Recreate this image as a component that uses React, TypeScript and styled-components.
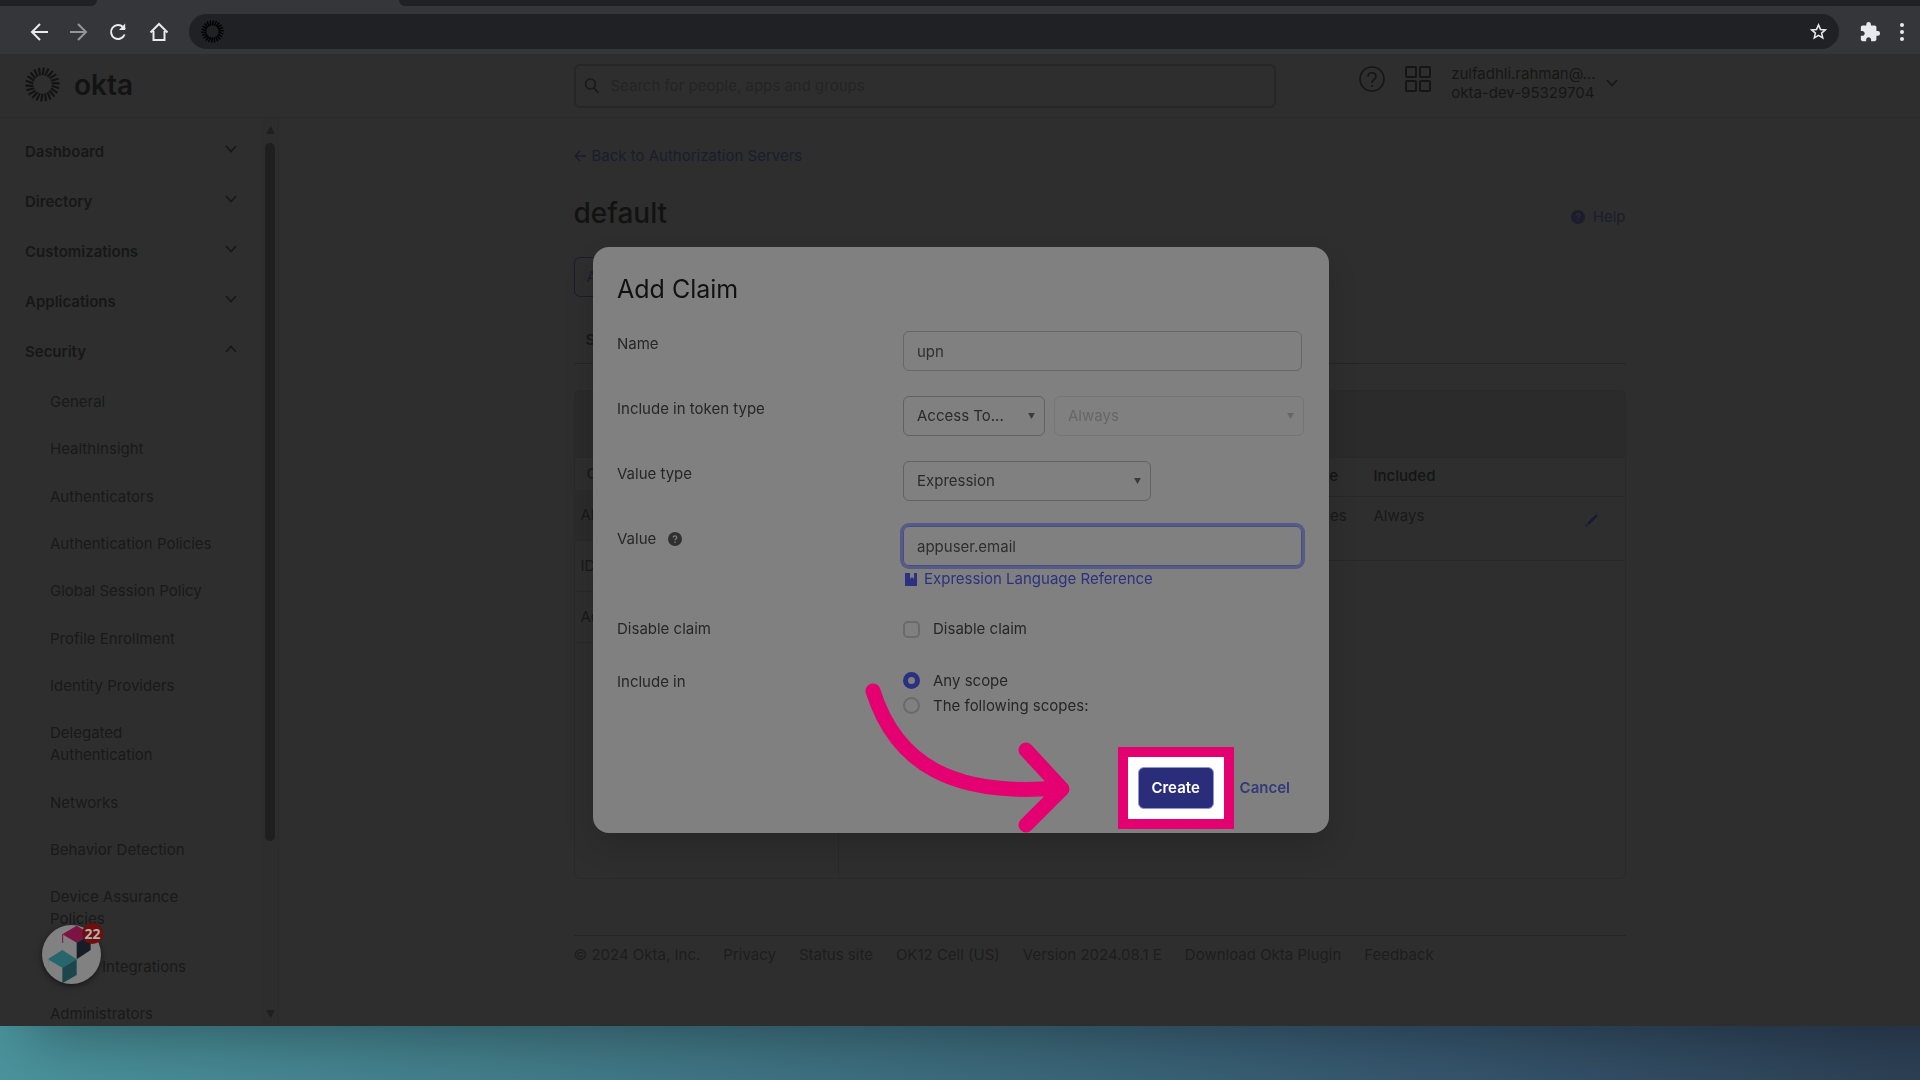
import React from "react";
import styled, { createGlobalStyle, css } from "styled-components";
import { MdExtension } from "react-icons/md";

const PINK = "#e50071";
const INDIGO = "#2b3080";

const GlobalStyle = createGlobalStyle`
  *, *::before, *::after { box-sizing: border-box; }
  html, body { margin: 0; padding: 0; }
  body {
    font-family: Inter, "Liberation Sans", sans-serif;
    font-size: 15px;
    line-height: 22px;
    color: #191919;
  }
  button, input, select { font: inherit; color: inherit; }
  button { background: none; border: 0; padding: 0; cursor: pointer; }
  a { color: inherit; text-decoration: none; }
  ul { list-style: none; margin: 0; padding: 0; }
  svg { display: block; flex: none; }
`;

const Backdrop = styled.div`
  height: 100vh;
  display: flex;
  flex-direction: column;
  padding-bottom: 54px;
  overflow: hidden;
  background: linear-gradient(97deg, #4c98a1 0%, #437f8b 30%, #3c6a7c 55%, #36566e 76%, #2d4055 100%);
`;

const BrowserWindow = styled.div`
  flex: 1;
  min-height: 0;
  position: relative;
  display: flex;
  flex-direction: column;
  background: #2e2e2e;
  box-shadow: 30px 6px 60px rgba(0, 0, 0, 0.38);
`;

const TabStrip = styled.div`
  height: 6px;
  display: flex;
  background: #35363a;
`;

const TabGap = styled.div<{ $width?: number; $side: "left" | "right" }>`
  background: #202124;
  ${(p) => (p.$width ? css`width: ${p.$width}px;` : css`flex: 1;`)}
  border-radius: ${(p) => (p.$side === "left" ? "0 0 8px 0" : "0 0 0 8px")};
`;

const ActiveTab = styled.div`
  width: 302px;
`;

const Toolbar = styled.div`
  height: 48px;
  display: flex;
  align-items: center;
  padding: 8px 9px 5px 28px;
  background: #35363a;
`;

const NavButtons = styled.div`
  display: flex;
  gap: 18px;
  margin-right: 19px;
`;

const ToolButton = styled.button<{ $dim?: boolean }>`
  display: flex;
  color: ${(p) => (p.$dim ? "#94969a" : "#e8eaed")};
`;

const AddressBar = styled.div`
  flex: 1;
  height: 35px;
  display: flex;
  align-items: center;
  justify-content: space-between;
  padding: 0 12px;
  border-radius: 18px;
  background: #202124;
  color: #cdced1;
`;

const SiteIcon = styled.span`
  color: #000;
`;

const BrowserActions = styled.div`
  display: flex;
  align-items: center;
  gap: 12px;
  margin-left: 20px;
`;

const Header = styled.header`
  height: 64px;
  display: grid;
  grid-template-columns: 279px 1fr;
  border-bottom: 1px solid #292929;
`;

const Brand = styled.a`
  display: flex;
  align-items: center;
  gap: 14px;
  padding-left: 25px;
  padding-bottom: 2px;
  font-size: 28px;
  font-weight: 600;
  color: #131313;
`;

const HeaderContent = styled.div`
  width: 100%;
  max-width: 1052px;
  margin: 0 auto;
  padding-right: 8px;
  display: flex;
  align-items: center;
  justify-content: space-between;
`;

const SearchField = styled.label`
  width: 702px;
  height: 44px;
  display: flex;
  align-items: center;
  gap: 11px;
  padding: 0 8px;
  border: 2px solid #262626;
  border-radius: 6px;
  color: #191919;
`;

const SearchInput = styled.input`
  flex: 1;
  border: 0;
  outline: 0;
  padding: 0;
  background: transparent;
  &::placeholder { color: #242424; opacity: 1; }
`;

const HeaderTools = styled.div`
  align-self: flex-start;
  display: flex;
  align-items: flex-start;
  gap: 20px;
  padding-top: 12px;
  color: #151515;
`;

const AccountButton = styled.button`
  display: flex;
  align-items: center;
  gap: 10px;
  margin-top: -2px;
  text-align: left;
  line-height: 19px;
  color: #161616;
`;

const Body = styled.div`
  flex: 1;
  min-height: 0;
  display: grid;
  grid-template-columns: 279px 1fr;
`;

const Sidebar = styled.aside`
  display: flex;
  min-height: 0;
  overflow: hidden;
  border-right: 1px solid #2a2a2a;
`;

const SideNav = styled.nav`
  flex: 1;
  display: flex;
  flex-direction: column;
  padding: 23px 25px 1px 25px;
`;

const TopList = styled.ul`
  display: grid;
  gap: 28px;
  margin-bottom: 28px;
`;

const TopItem = styled.button`
  width: 100%;
  display: flex;
  justify-content: space-between;
  align-items: center;
  font-weight: 600;
  color: #171717;
  svg { margin-bottom: 6px; }
`;

const SubList = styled.ul`
  flex: 1;
  display: flex;
  flex-direction: column;
  justify-content: space-between;
  padding-left: 25px;
  color: #191919;
`;

const SubItem = styled.li<{ $covered?: boolean }>`
  max-width: 164px;
  padding-left: ${(p) => (p.$covered ? 52 : 0)}px;
`;

const ScrollTrack = styled.div`
  width: 16px;
  display: flex;
  flex-direction: column;
  align-items: center;
  padding: 8px 0 8px;
  background: #2d2d2d;
  color: #1f1f1f;
`;

const ScrollThumb = styled.div`
  width: 10px;
  height: 698px;
  margin: 9px 0 auto;
  border-radius: 5px;
  background: #1f1f1f;
`;

const Main = styled.main`
  min-width: 0;
  overflow: hidden;
`;

const Content = styled.div`
  width: 100%;
  max-width: 1052px;
  margin: 0 auto;
  padding-top: 27px;
`;

const BackLink = styled.a`
  display: flex;
  align-items: center;
  gap: 6px;
  color: #1c1c2c;
`;

const TitleRow = styled.div`
  display: flex;
  justify-content: space-between;
  align-items: center;
  margin-top: 28px;
`;

const PageTitle = styled.h1`
  margin: 0;
  font-size: 28px;
  line-height: 36px;
  font-weight: 500;
  color: #121212;
`;

const HelpLink = styled.a`
  display: flex;
  align-items: center;
  gap: 8px;
  padding-top: 8px;
  color: #1c1c2c;
`;

const StatusButton = styled.button`
  display: block;
  width: 120px;
  height: 40px;
  margin-top: 26px;
  padding: 0 12px;
  border: 1px solid #1c1c30;
  border-radius: 6px;
  text-align: left;
  color: #1c1c30;
`;

const TabRow = styled.div`
  display: flex;
  margin-top: 20px;
  height: 47px;
  align-items: center;
  padding-left: 12px;
  border-bottom: 1px solid #252525;
  font-weight: 600;
`;

const Panel = styled.section`
  height: 489px;
  margin-top: 26px;
  display: grid;
  grid-template: 67px 1fr / 264px 1fr;
  border: 1px solid #292929;
  border-radius: 6px;
  overflow: hidden;
`;

const PanelHead = styled.div`
  grid-column: 1 / -1;
  background: #2b2b2b;
  border-bottom: 1px solid #292929;
`;

const ClaimTypes = styled.div`
  border-right: 1px solid #292929;
`;

const ClaimHeading = styled.div`
  height: 32px;
  padding: 5px 12px;
  font-weight: 500;
`;

const ClaimRow = styled.div<{ $selected?: boolean }>`
  height: 51px;
  display: flex;
  align-items: center;
  padding-left: 6px;
  border-bottom: 1px solid #292929;
  background: ${(p) => (p.$selected ? "#2b2b2b" : "transparent")};
`;

const ClaimTable = styled.table`
  width: 100%;
  align-self: start;
  border-collapse: collapse;
  table-layout: fixed;
  th, td {
    padding: 0;
    text-align: left;
    vertical-align: top;
    border-bottom: 1px solid #272727;
  }
  th { height: 38px; padding-top: 7px; font-weight: 500; color: #141414; }
  td { height: 64px; padding-top: 8px; word-break: break-all; }
`;

const Column = styled.col<{ $width?: number }>`
  width: ${(p) => (p.$width ? `${p.$width}px` : "auto")};
`;

const EditButton = styled.button`
  padding-top: 8px;
  color: #1a1a34;
`;

const Footer = styled.footer`
  display: flex;
  gap: 23px;
  margin-top: 56px;
  padding-top: 8px;
  border-top: 1px solid #252525;
  color: #1d1d1d;
`;

const ChatBubble = styled.button`
  position: absolute;
  left: 42px;
  bottom: 42px;
  width: 59px;
  height: 59px;
  border-radius: 50%;
  background: #818181;
  box-shadow: 0 2px 6px rgba(0, 0, 0, 0.5);
`;

const BubbleCount = styled.span`
  position: absolute;
  top: -2px;
  right: -2px;
  width: 21px;
  height: 21px;
  border-radius: 50%;
  background: #6e0f0c;
  color: #b4b0b0;
  font: 700 14px/21px "Noto Sans", sans-serif;
  text-align: center;
`;

const Overlay = styled.div`
  position: fixed;
  inset: 0;
  display: flex;
  align-items: center;
  justify-content: center;
  padding-left: 2px;
  pointer-events: none;
`;

const Dialog = styled.form`
  position: relative;
  pointer-events: auto;
  width: 736px;
  padding: 24px 24px 4px;
  border-radius: 16px;
  background: #808080;
  color: #262626;
  box-shadow: 0 14px 30px rgba(0, 0, 0, 0.14);
`;

const DialogTitle = styled.h2`
  margin: 0 0 24px;
  font-size: 25px;
  line-height: 36px;
  font-weight: 400;
  color: #111;
`;

const Fields = styled.div`
  display: grid;
  gap: 25px;
`;

const FieldRow = styled.div`
  display: grid;
  grid-template-columns: 286px 1fr;
`;

const FieldLabel = styled.label`
  display: flex;
  align-items: center;
  gap: 12px;
  height: 22px;
  margin-top: 2px;
`;

const HintIcon = styled.span`
  color: #303030;
`;

const ControlGroup = styled.div`
  display: flex;
  gap: 9px;
`;

const boxStyle = css`
  height: 40px;
  padding: 0 13px;
  border: 1px solid #666;
  border-radius: 6px;
  background: transparent;
  outline: 0;
`;

const TextInput = styled.input<{ $focused?: boolean }>`
  ${boxStyle}
  width: 399px;
  color: #2e2e2e;
  ${(p) => p.$focused && css`border-color: #4a4d80; box-shadow: 0 0 0 3px #565a86;`}
`;

const SelectBox = styled.div<{ $width: number; $muted?: boolean }>`
  width: ${(p) => p.$width}px;
  display: grid;
  align-items: center;
  color: ${(p) => (p.$muted ? "#666" : "#2a2a2a")};
  > * { grid-area: 1 / 1; }
  > svg { justify-self: end; margin-right: 10px; pointer-events: none; color: ${(p) => (p.$muted ? "#666" : "#3a3a3a")}; }
  select { border-color: ${(p) => (p.$muted ? "#757575" : "#626262")}; }
`;

const SelectInput = styled.select`
  ${boxStyle}
  width: 100%;
  appearance: none;
  opacity: 1;
`;

const ReferenceLink = styled.a`
  display: flex;
  align-items: center;
  gap: 7px;
  margin-top: 2px;
  padding-left: 2px;
  color: ${INDIGO};
`;

const Choice = styled.label<{ $height: number }>`
  height: ${(p) => p.$height}px;
  display: flex;
  align-items: center;
  gap: 13px;
`;

const ChoiceInput = styled.input`
  appearance: none;
  width: 17px;
  height: 17px;
  margin: 0;
  border: 2px solid #6a6a6a;
  border-radius: ${(p) => (p.type === "radio" ? "50%" : "5px")};
  &:checked { border: 5px solid ${INDIGO}; }
`;

const GroupLabel = styled.div`
  padding-top: 3px;
`;

const Actions = styled.div`
  display: flex;
  justify-content: flex-end;
  align-items: center;
  gap: 6px;
  margin-top: 29px;
  padding-right: 15px;
`;

const Spotlight = styled.div`
  padding: 10px;
  border: 10px solid ${PINK};
  background: #fff;
`;

const CreateButton = styled.button`
  display: block;
  width: 76px;
  height: 42px;
  border: 1px solid #8f93dc;
  border-radius: 6px;
  background: #292d7a;
  color: #fff;
  font-weight: 600;
`;

const CancelButton = styled.button`
  font-weight: 600;
  color: #333979;
`;

const PointerArrow = styled.svg`
  position: absolute;
  left: 265px;
  top: 427px;
  pointer-events: none;
`;

function Chevron({ up }: { up?: boolean }) {
  return (
    <svg width="12" height="8" viewBox="0 0 12 8" fill="none" stroke="currentColor" strokeWidth="1.600">
      <path d={up ? "M1 7 6 1.5 11 7" : "M1 1 6 6.5 11 1"} />
    </svg>
  );
}

function Triangle({ up, size = 7 }: { up?: boolean; size?: number }) {
  return (
    <svg width={size} height={size - 1} viewBox="0 0 10 9" fill="currentColor">
      <path d={up ? "M5 0 10 9H0z" : "M0 0h10L5 9z"} />
    </svg>
  );
}

function Burst({ size, inner, stroke }: { size: number; inner: number; stroke: number }) {
  const rays = Array.from({ length: 22 }, (_, i) => i * (360 / 22));
  return (
    <svg width={size} height={size} viewBox="-18 -18 36 36" stroke="currentColor" strokeWidth={stroke}>
      {rays.map((angle) => (
        <line key={angle} x1="0" y1={-inner} x2="1.4" y2="-17.5" transform={`rotate(${angle})`} />
      ))}
    </svg>
  );
}

function QuestionDot({ size, mark }: { size: number; mark: string }) {
  return (
    <svg width={size} height={size} viewBox="0 0 14 14">
      <circle cx="7" cy="7" r="7" fill="currentColor" />
      <path d="M5.2 5.6c0-2.4 3.6-2.3 3.6-.1C8.8 7 7 6.900 7 8.300M7 9.600v1.300" fill="none" stroke={mark} strokeWidth="1.200" />
    </svg>
  );
}

const strokeIcon = { fill: "none", stroke: "currentColor", strokeWidth: 2 } as const;

const topItems = ["Dashboard", "Directory", "Customizations", "Applications", "Security"];
const subItems = [
  "General",
  "HealthInsight",
  "Authenticators",
  "Authentication Policies",
  "Global Session Policy",
  "Profile Enrollment",
  "Identity Providers",
  "Delegated Authentication",
  "Networks",
  "Behavior Detection",
  "Device Assurance Policies",
  "Integrations",
  "Administrators",
];
const footerItems = [
  "Privacy",
  "Status site",
  "OK12 Cell (US)",
  "Version 2024.08.1 E",
  "Download Okta Plugin",
  "Feedback",
];

function BrowserChrome() {
  return (
    <>
      <TabStrip>
        <TabGap $width={97} $side="left" />
        <ActiveTab />
        <TabGap $side="right" />
      </TabStrip>
      <Toolbar>
        <NavButtons>
          <ToolButton aria-label="Back">
            <svg width="22" height="22" viewBox="0 0 22 22" {...strokeIcon}><path d="M20 11H4M12 3 4 11l8 8" /></svg>
          </ToolButton>
          <ToolButton aria-label="Forward" $dim>
            <svg width="22" height="22" viewBox="0 0 22 22" {...strokeIcon}><path d="M2 11h16M10 3l8 8-8 8" /></svg>
          </ToolButton>
          <ToolButton aria-label="Reload">
            <svg width="22" height="22" viewBox="0 0 22 22" {...strokeIcon}>
              <path d="M16.600 13.500A7 7 0 1 1 15 6l2 2.200" />
              <path d="M17.200 2.500V9H11z" fill="currentColor" stroke="none" />
            </svg>
          </ToolButton>
          <ToolButton aria-label="Home">
            <svg width="22" height="22" viewBox="0 0 22 22" {...strokeIcon}><path d="M2.500 11.500 11 3l8.500 8.500M5.500 10v9h11v-9" /></svg>
          </ToolButton>
        </NavButtons>
        <AddressBar>
          <SiteIcon><Burst size={23} inner={9.5} stroke={2.4} /></SiteIcon>
          <ToolButton aria-label="Bookmark">
            <svg width="17" height="17" viewBox="0 0 18 18" fill="none" stroke="currentColor" strokeWidth="1.600">
              <path d="m9 2 2.100 4.800 5.100.5-3.900 3.400 1.200 5.100L9 13.100l-4.500 2.700 1.200-5.100-3.900-3.400 5.100-.5z" />
            </svg>
          </ToolButton>
        </AddressBar>
        <BrowserActions>
          <ToolButton aria-label="Extensions"><MdExtension size={22} /></ToolButton>
          <ToolButton aria-label="Menu">
            <svg width="18" height="20" viewBox="0 0 18 20" fill="currentColor">
              <circle cx="9" cy="3" r="2" /><circle cx="9" cy="10" r="2" /><circle cx="9" cy="17" r="2" />
            </svg>
          </ToolButton>
        </BrowserActions>
      </Toolbar>
    </>
  );
}

function AdminHeader() {
  return (
    <Header>
      <Brand href="#home"><Burst size={35} inner={9.5} stroke={2.2} />okta</Brand>
      <HeaderContent>
        <SearchField>
          <svg width="16" height="18" viewBox="0 0 16 18" fill="none" stroke="currentColor" strokeWidth="1.600"><circle cx="6.500" cy="7" r="5" /><path d="m10 11 4.500 5" /></svg>
          <SearchInput type="search" placeholder="Search for people, apps and groups" aria-label="Search" />
        </SearchField>
        <HeaderTools>
          <svg width="26" height="26" viewBox="0 0 26 26" fill="none" stroke="currentColor" strokeWidth="1.600">
            <circle cx="13" cy="13" r="12" />
            <path d="M9 10.500C9 5.500 17 5.500 17 10.300c0 3.200-4 3-4 6.700M13 19v2" />
          </svg>
          <svg width="26" height="26" viewBox="0 0 26 26" {...strokeIcon}>
            <rect x="1" y="1" width="10" height="10" rx="1" /><rect x="15" y="1" width="10" height="10" rx="1" />
            <rect x="1" y="15" width="10" height="10" rx="1" /><rect x="15" y="15" width="10" height="10" rx="1" />
          </svg>
          <AccountButton>
            <span>zulfadhli.rahman@...<br />okta-dev-95329704</span>
            <Chevron />
          </AccountButton>
        </HeaderTools>
      </HeaderContent>
    </Header>
  );
}

function AdminSidebar() {
  return (
    <Sidebar>
      <SideNav>
        <TopList>
          {topItems.map((item) => (
            <li key={item}>
              <TopItem>{item}<Chevron up={item === "Security"} /></TopItem>
            </li>
          ))}
        </TopList>
        <SubList>
          {subItems.map((item) => (
            <SubItem key={item} $covered={item === "Integrations"}><a href="#section">{item}</a></SubItem>
          ))}
        </SubList>
      </SideNav>
      <ScrollTrack>
        <Triangle up size={9} />
        <ScrollThumb />
        <Triangle size={9} />
      </ScrollTrack>
    </Sidebar>
  );
}

function ServerPage() {
  return (
    <Main>
      <Content>
        <BackLink href="#servers">
          <svg width="12" height="12" viewBox="0 0 12 12" fill="none" stroke="currentColor" strokeWidth="1.500"><path d="M12 6H1M6 1 1 6l5 5" /></svg>
          Back to Authorization Servers
        </BackLink>
        <TitleRow>
          <PageTitle>default</PageTitle>
          <HelpLink href="#help"><QuestionDot size={14} mark="#2e2e3e" />Help</HelpLink>
        </TitleRow>
        <StatusButton>Active</StatusButton>
        <TabRow>Settings</TabRow>
        <Panel>
          <PanelHead />
          <ClaimTypes>
            <ClaimHeading>Claim type</ClaimHeading>
            <ClaimRow $selected>All</ClaimRow>
            <ClaimRow>ID</ClaimRow>
            <ClaimRow>Access</ClaimRow>
          </ClaimTypes>
          <ClaimTable>
            <colgroup>
              <Column /><Column $width={71} /><Column $width={211} /><Column $width={40} />
            </colgroup>
            <thead>
              <tr><th>Name</th><th>Type</th><th>Included</th><th aria-label="Actions" /></tr>
            </thead>
            <tbody>
              <tr>
                <td>sub</td><td>Acces</td><td>Always</td>
                <td>
                  <EditButton aria-label="Edit">
                    <svg width="14" height="14" viewBox="0 0 14 14" fill="none" stroke="currentColor" strokeWidth="2.500"><path d="m3 11 9-9M1 13l1-1" /></svg>
                  </EditButton>
                </td>
              </tr>
            </tbody>
          </ClaimTable>
        </Panel>
        <Footer>
          <span>© 2024 Okta, Inc.</span>
          {footerItems.map((item) => <a key={item} href="#footer">{item}</a>)}
        </Footer>
      </Content>
    </Main>
  );
}

function AddClaimDialog() {
  return (
    <Overlay>
      <Dialog role="dialog" aria-labelledby="dialog-title" onSubmit={(e) => e.preventDefault()}>
        <DialogTitle id="dialog-title">Add Claim</DialogTitle>
        <Fields>
          <FieldRow>
            <FieldLabel htmlFor="name">Name</FieldLabel>
            <TextInput id="name" defaultValue="upn" />
          </FieldRow>
          <FieldRow>
            <FieldLabel htmlFor="token">Include in token type</FieldLabel>
            <ControlGroup>
              <SelectBox $width={142}>
                <SelectInput id="token"><option>Access To...</option></SelectInput>
                <Triangle />
              </SelectBox>
              <SelectBox $width={250} $muted>
                <SelectInput disabled aria-label="When to include"><option>Always</option></SelectInput>
                <Triangle />
              </SelectBox>
            </ControlGroup>
          </FieldRow>
          <FieldRow>
            <FieldLabel htmlFor="value-type">Value type</FieldLabel>
            <SelectBox $width={248}>
              <SelectInput id="value-type"><option>Expression</option></SelectInput>
              <Triangle />
            </SelectBox>
          </FieldRow>
          <FieldRow>
            <FieldLabel htmlFor="value">Value<HintIcon><QuestionDot size={14} mark="#808080" /></HintIcon></FieldLabel>
            <div>
              <TextInput id="value" defaultValue="appuser.email" $focused />
              <ReferenceLink href="#reference">
                <svg width="12" height="13" viewBox="0 0 12 13" fill="currentColor"><path d="M0 0h5v6l2-2 2 2V0h3v13H0z" /></svg>
                Expression Language Reference
              </ReferenceLink>
            </div>
          </FieldRow>
          <FieldRow>
            <GroupLabel>Disable claim</GroupLabel>
            <Choice $height={28}><ChoiceInput type="checkbox" />Disable claim</Choice>
          </FieldRow>
          <FieldRow>
            <GroupLabel>Include in</GroupLabel>
            <div>
              <Choice $height={25}><ChoiceInput type="radio" name="scope" defaultChecked />Any scope</Choice>
              <Choice $height={25}><ChoiceInput type="radio" name="scope" />The following scopes:</Choice>
            </div>
          </FieldRow>
        </Fields>
        <Actions>
          <Spotlight><CreateButton type="submit">Create</CreateButton></Spotlight>
          <CancelButton type="button">Cancel</CancelButton>
        </Actions>
        <PointerArrow width="220" height="160" viewBox="0 0 220 160" fill="none" stroke={PINK} strokeWidth="15" strokeLinecap="round" strokeLinejoin="round">
          <path d="M15 17C38 90 95 123 200 114" />
          <path d="M168 76 204 115 168 151" />
        </PointerArrow>
      </Dialog>
    </Overlay>
  );
}

function SupportBubble() {
  return (
    <ChatBubble aria-label="Notifications">
      <svg width="59" height="59" viewBox="126 75 177 177">
        <path d="M187 103 230 77 272 103 230 128z" fill="#7d1344" />
        <path d="M188 103v26" stroke="#7d1344" strokeWidth="3" />
        <path d="M230 128 272 103V150L230 178z" fill="#171d24" />
        <path d="M143 178 187 150 230 178 187 203z" fill="#28666d" />
        <path d="M145 178v26" stroke="#6b8284" strokeWidth="4" />
        <path d="M187 203 230 178V225L187 250z" fill="#1b474c" />
      </svg>
      <BubbleCount>22</BubbleCount>
    </ChatBubble>
  );
}

export default function App() {
  return (
    <>
      <GlobalStyle />
      <Backdrop>
        <BrowserWindow>
          <BrowserChrome />
          <AdminHeader />
          <Body>
            <AdminSidebar />
            <ServerPage />
          </Body>
          <SupportBubble />
        </BrowserWindow>
      </Backdrop>
      <AddClaimDialog />
    </>
  );
}
